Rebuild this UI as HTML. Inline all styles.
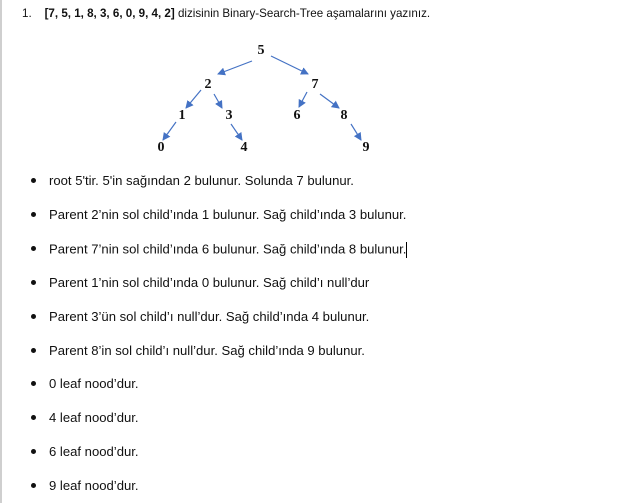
<!DOCTYPE html>
<html><head><meta charset="utf-8"><style>
html,body{margin:0;padding:0;background:#fff;width:623px;height:503px;overflow:hidden}
body{position:relative;font-family:"Liberation Sans","DejaVu Sans",sans-serif;color:#111}
.bl{position:absolute;left:0;top:0;width:2px;height:503px;background:#cfcfcf}
.t{position:absolute;font-size:13.1px;white-space:nowrap;line-height:14px}
.dot{position:absolute;left:31px;width:5px;height:5px;border-radius:50%;background:#111}
.n{position:absolute;font-family:"Liberation Serif",serif;font-weight:bold;font-size:14px;transform:translate(-50%,-50%);line-height:14px}
</style></head><body>
<div class="bl"></div>
<div class="t" style="left:22px;top:7px;font-size:11.6px">1.&nbsp;&nbsp;&nbsp;&nbsp;<b>[7, 5, 1, 8, 3, 6, 0, 9, 4, 2]</b> dizisinin Binary-Search-Tree aşamalarını yazınız.</div>
<svg style="position:absolute;left:0;top:0" width="623" height="170">
<defs><marker id="a" markerWidth="8" markerHeight="8" refX="7" refY="4" orient="auto" markerUnits="userSpaceOnUse"><path d="M0,0 L8,4 L0,8 z" fill="#4472c4"/></marker></defs>
<g stroke="#4472c4" stroke-width="1.2" marker-end="url(#a)">
<line x1="252" y1="61" x2="218" y2="74"/>
<line x1="271" y1="56" x2="308" y2="74"/>
<line x1="201" y1="90" x2="186" y2="108"/>
<line x1="214" y1="94" x2="222" y2="108"/>
<line x1="307" y1="92" x2="299" y2="107"/>
<line x1="320" y1="94" x2="339" y2="108"/>
<line x1="176" y1="122" x2="163" y2="140"/>
<line x1="231" y1="124" x2="242" y2="140"/>
<line x1="351" y1="124" x2="361" y2="140"/>
</g></svg>
<div class="n" style="left:261px;top:51px">5</div>
<div class="n" style="left:208px;top:85px">2</div>
<div class="n" style="left:315px;top:85px">7</div>
<div class="n" style="left:182px;top:116px">1</div>
<div class="n" style="left:229px;top:116px">3</div>
<div class="n" style="left:297px;top:116px">6</div>
<div class="n" style="left:344px;top:116px">8</div>
<div class="n" style="left:161px;top:148px">0</div>
<div class="n" style="left:244px;top:148px">4</div>
<div class="n" style="left:366px;top:148px">9</div>

<div class="dot" style="top:178px"></div><div class="t" style="left:49px;top:174px">root 5'tir. 5'in sağından 2 bulunur. Solunda 7 bulunur.</div>
<div class="dot" style="top:212px"></div><div class="t" style="left:49px;top:208px">Parent 2’nin sol child’ında 1 bulunur. Sağ child’ında 3 bulunur.</div>
<div class="dot" style="top:246px"></div><div class="t" style="left:49px;top:242px">Parent 7’nin sol child’ında 6 bulunur. Sağ child’ında 8 bulunur.<span style="display:inline-block;width:1px;height:16px;background:#000;vertical-align:middle"></span></div>
<div class="dot" style="top:280px"></div><div class="t" style="left:49px;top:276px">Parent 1’nin sol child’ında 0 bulunur. Sağ child’ı null’dur</div>
<div class="dot" style="top:314px"></div><div class="t" style="left:49px;top:310px">Parent 3’ün sol child’ı null’dur. Sağ child’ında 4 bulunur.</div>
<div class="dot" style="top:348px"></div><div class="t" style="left:49px;top:344px">Parent 8’in sol child’ı null’dur. Sağ child’ında 9 bulunur.</div>
<div class="dot" style="top:381px"></div><div class="t" style="left:49px;top:377px">0 leaf nood’dur.</div>
<div class="dot" style="top:415px"></div><div class="t" style="left:49px;top:411px">4 leaf nood’dur.</div>
<div class="dot" style="top:449px"></div><div class="t" style="left:49px;top:445px">6 leaf nood’dur.</div>
<div class="dot" style="top:483px"></div><div class="t" style="left:49px;top:479px">9 leaf nood’dur.</div>
</body></html>
